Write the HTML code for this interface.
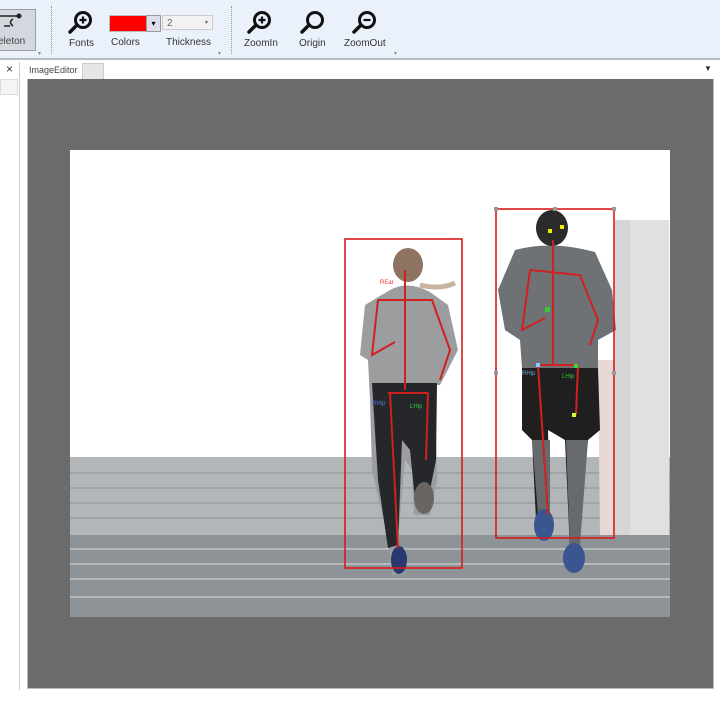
<!DOCTYPE html>
<html><head><style>
body{margin:0;width:720px;height:710px;overflow:hidden;background:#fff;font-family:"Liberation Sans",sans-serif;position:relative}
.tb{position:absolute;left:0;top:0;width:720px;height:60px;background:#eaf1fb;border-bottom:2px solid #b8bcc2;box-sizing:border-box}
.lbl{position:absolute;font-size:10px;color:#333}
.sep{position:absolute;top:6px;width:0;height:48px;border-left:1px dotted #999}
.arr{position:absolute;font-size:6px;color:#888;top:50px}
</style></head><body>
<div class="tb">
 <div style="position:absolute;left:-4px;top:9px;width:38px;height:40px;background:#d4d8de;border:1px solid #9aa0a8"></div>
 <svg style="position:absolute;left:0;top:10px" width="30" height="22"><path d="M0 6 H18 M4 16 H10 M13 9 q-5 3 0 7" stroke="#222" stroke-width="1.6" fill="none"/><circle cx="19" cy="6" r="2.5" fill="#222"/></svg>
 <div class="lbl" style="left:-2px;top:36px;color:#444">eleton</div>
 <div class="arr" style="left:38px">▾</div>
 <div class="sep" style="left:51px"></div>
 <svg style="position:absolute;left:67px;top:10px" width="28" height="24"><circle cx="16" cy="10" r="7.5" stroke="#111" stroke-width="3" fill="none"/><path d="M10 15 L3 22" stroke="#111" stroke-width="3.5" stroke-linecap="round"/><path d="M12.5 10h7M16 6.5v7" stroke="#111" stroke-width="2.2"/></svg>
 <div class="lbl" style="left:69px;top:38px">Fonts</div>
 <div style="position:absolute;left:109px;top:15px;width:36px;height:15px;background:#f00;border:1px solid #bbb"></div>
 <div style="position:absolute;left:146px;top:15px;width:13px;height:15px;background:#dde;border:1px solid #999;font-size:8px;text-align:center;line-height:15px">▾</div>
 <div style="position:absolute;left:162px;top:15px;width:51px;height:15px;background:#f2f2f2;border:1px solid #ccc;font-size:10px;color:#666;line-height:15px;padding-left:4px;box-sizing:border-box">2<span style="float:right;font-size:6px;margin-right:4px">▾</span></div>
 <div class="lbl" style="left:111px;top:37px">Colors</div>
 <div class="lbl" style="left:166px;top:37px">Thickness</div>
 <div class="arr" style="left:218px">▾</div>
 <div class="sep" style="left:231px"></div>
 <svg style="position:absolute;left:246px;top:10px" width="28" height="24"><circle cx="16" cy="10" r="7.5" stroke="#111" stroke-width="3" fill="none"/><path d="M10 15 L3 22" stroke="#111" stroke-width="3.5" stroke-linecap="round"/><path d="M12.5 10h7M16 6.5v7" stroke="#111" stroke-width="2.2"/></svg>
 <div class="lbl" style="left:244px;top:38px">ZoomIn</div>
 <svg style="position:absolute;left:299px;top:10px" width="28" height="24"><circle cx="16" cy="10" r="7.5" stroke="#111" stroke-width="3" fill="none"/><path d="M10 15 L3 22" stroke="#111" stroke-width="3.5" stroke-linecap="round"/></svg>
 <div class="lbl" style="left:299px;top:38px">Origin</div>
 <svg style="position:absolute;left:351px;top:10px" width="28" height="24"><circle cx="16" cy="10" r="7.5" stroke="#111" stroke-width="3" fill="none"/><path d="M10 15 L3 22" stroke="#111" stroke-width="3.5" stroke-linecap="round"/><path d="M12.5 10h7" stroke="#111" stroke-width="2.2"/></svg>
 <div class="lbl" style="left:344px;top:38px">ZoomOut</div>
 <div class="arr" style="left:394px">▾</div>
</div>
<div style="position:absolute;left:0;top:62px;width:19px;height:628px;border-right:1px solid #ccc;background:#fff"></div>
<div style="position:absolute;left:6px;top:62px;font-size:12px;color:#333">×</div>
<div style="position:absolute;left:0;top:79px;width:16px;height:14px;border:1px solid #ddd;background:#f4f4f4"></div>
<div style="position:absolute;left:26px;top:62px;width:55px;height:16px;background:#fff;font-size:9px;color:#444;line-height:16px;padding-left:3px">ImageEditor</div>
<div style="position:absolute;left:82px;top:63px;width:20px;height:15px;background:#e6e6e6;border:1px solid #ccc"></div>
<div style="position:absolute;left:704px;top:64px;font-size:8px;color:#333">▼</div>
<div style="position:absolute;left:27px;top:79px;width:687px;height:610px;background:#6b6b6b;border:1px solid #bbb;border-top:none;box-sizing:border-box"></div>
<svg style="position:absolute;left:70px;top:150px" width="600" height="467" viewBox="70 150 600 467">
 <rect x="70" y="150" width="600" height="467" fill="#fff"/>
 <rect x="70" y="457" width="600" height="80" fill="#b3b6b9"/>
 <rect x="70" y="535" width="600" height="82" fill="#8e9398"/>
 <g stroke="#9a9da1" stroke-width="1.5"><path d="M70 473H670M70 488H670M70 503H670M70 518H670"/></g>
 <g stroke="#c4c6c8" stroke-width="1.5"><path d="M70 549H670M70 564H670M70 579H670M70 597H670"/></g>
 <rect x="615" y="220" width="54" height="315" fill="#d6d6d6"/><rect x="630" y="220" width="39" height="315" fill="#e0e0e0"/>
 <path d="M598 360 L615 360 L615 535 L600 535Z" fill="#e8d8d4"/>
 <!-- woman -->
 <path d="M390 290 Q408 280 430 292 L448 305 L458 350 L440 385 L435 385 L437 480 L430 515 L414 515 L412 470 L405 460 L398 540 L404 575 L392 575 L388 540 L372 470 L370 400 L368 360 L360 355 L365 305Z" fill="#9b9d9f"/>
 <path d="M372 383 H437 L436 460 L428 500 L415 500 L410 450 L402 440 L398 545 L388 548 L378 480 Z" fill="#26272a"/>
 <ellipse cx="408" cy="265" rx="15" ry="17" fill="#8e7460"/>
 <path d="M420 285 Q440 290 455 283" stroke="#c9b4a0" stroke-width="5" fill="none"/>
 <ellipse cx="424" cy="498" rx="10" ry="16" fill="#6a6560"/>
 <ellipse cx="399" cy="560" rx="8" ry="14" fill="#2a3a70"/>
 <!-- man -->
 <path d="M515 250 Q552 240 595 252 L612 290 L616 330 L598 340 L598 368 L522 368 L520 340 L505 330 L498 290 Z" fill="#6f7275"/>
 <ellipse cx="552" cy="228" rx="16" ry="18" fill="#2b2b2b"/>
 <path d="M522 368 H598 L600 430 L588 440 L582 500 L578 550 L570 550 L565 440 L548 430 L550 510 L545 520 L536 520 L532 440 L522 430Z" fill="#1f1f20"/>
 <path d="M532 440 L550 440 L550 510 L538 515Z M566 440 L588 440 L580 545 L570 545Z" fill="#666a6d"/>
 <ellipse cx="544" cy="525" rx="10" ry="16" fill="#3a5590"/>
 <ellipse cx="574" cy="558" rx="11" ry="15" fill="#3a5590"/>
 <!-- boxes -->
 <g fill="none" stroke="#d91a1a" stroke-width="1.6"><rect x="345" y="239" width="117" height="329"/><rect x="496" y="209" width="118" height="329"/></g>
 <g fill="#999"><rect x="494" y="207" width="4" height="4"/><rect x="553" y="207" width="4" height="4"/><rect x="612" y="207" width="4" height="4"/><rect x="494" y="371" width="4" height="4"/><rect x="612" y="371" width="4" height="4"/></g>
 <!-- skeletons -->
 <g stroke="#d02020" stroke-width="2" fill="none">
  <path d="M405 270 V390 M378 300 H432 L450 350 L440 380 M378 300 L372 355 L395 342 M388 393 H428 M390 393 L398 548 M428 393 L426 460"/>
  <path d="M553 240 V365 M530 270 L580 275 L598 320 L590 345 M530 270 L522 330 L545 318 M538 365 H578 M538 365 L548 515 M578 365 L576 415"/>
 </g>
 <g font-size="6" fill="#4aa"><text x="372" y="405" fill="#5577cc">RHip</text><text x="410" y="408" fill="#3c3">LHip</text><text x="522" y="375" fill="#6ac">RHip</text><text x="562" y="378" fill="#3c3">LHip</text><text x="380" y="284" fill="#e33">REar</text></g>
 <g><rect x="548" y="229" width="4" height="4" fill="#ee0"/><rect x="560" y="225" width="4" height="4" fill="#ee0"/><rect x="536" y="363" width="4" height="4" fill="#8cf"/><rect x="574" y="364" width="4" height="4" fill="#3d3"/><rect x="572" y="413" width="4" height="4" fill="#cf3"/><rect x="545" y="307" width="5" height="5" fill="#3c3"/></g>
</svg>
</body></html>
